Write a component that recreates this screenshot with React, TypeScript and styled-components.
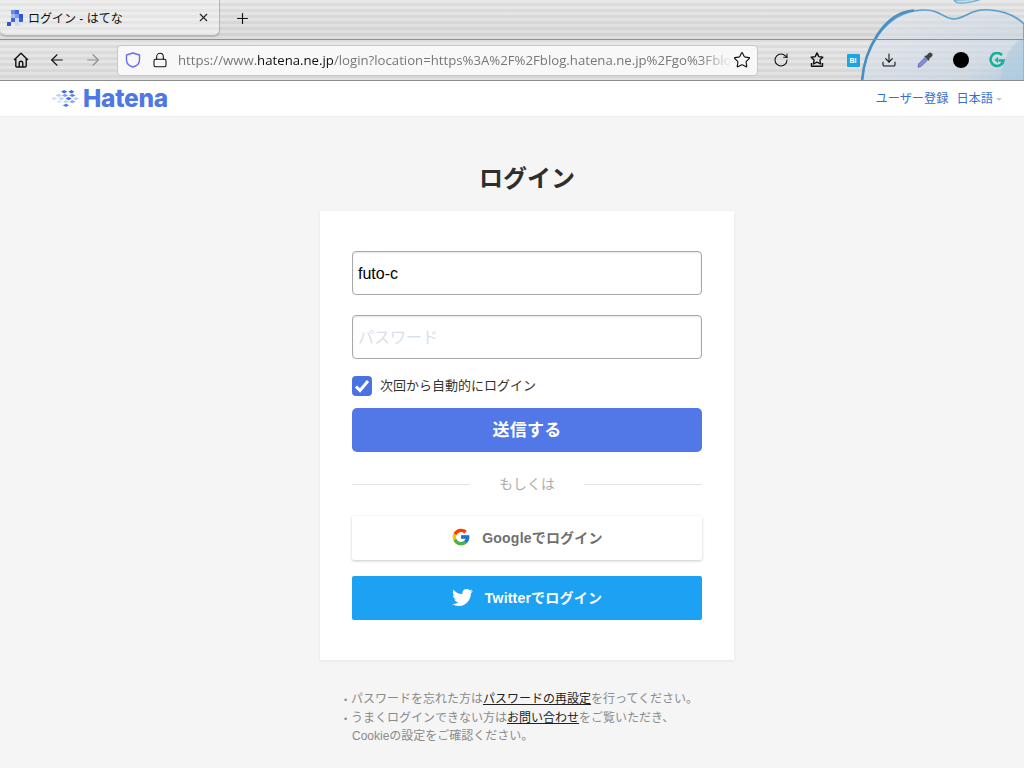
import styled, { createGlobalStyle } from 'styled-components'
import { ArrowLeft, ArrowRight, Lock, RotateCw, Star, X, Plus, Download } from 'lucide-react'
import { FaTwitter } from 'react-icons/fa'
import { FcGoogle } from 'react-icons/fc'

const JP = `"Liberation Sans", "Noto Sans CJK JP", sans-serif`

const GlobalStyle = createGlobalStyle`
  html, body {
    margin: 0;
    height: 768px;
    overflow: hidden;
    background: #f5f5f5;
    font-family: ${JP};
  }
`

const Chrome = styled.div`
  position: relative;
  height: 81px;
  overflow: hidden;
  border-bottom: 1px solid #8c8c8c;
  box-sizing: border-box;
  background:
    linear-gradient(180deg, rgba(255, 255, 255, 0.1), rgba(0, 0, 0, 0.04) 48%, rgba(255, 255, 255, 0.08) 50%, rgba(0, 0, 0, 0.02)),
    repeating-linear-gradient(180deg, #e6e6e6 0 3px, #dadada 3px 6px);
`

const AppleArt = styled.svg`
  position: absolute;
  top: 0;
  right: 0;
`

const TabStrip = styled.div`
  position: relative;
  display: flex;
  align-items: flex-start;
  height: 40px;
  box-sizing: border-box;
  border-bottom: 1px solid #8f8f8f;
`

const Tab = styled.div`
  display: flex;
  align-items: center;
  width: 220px;
  height: 36px;
  box-sizing: border-box;
  padding: 0 9px 0 7px;
  border: 1px solid #b4b4b4;
  border-top: 0;
  border-left: 0;
  border-radius: 0 0 6px 6px;
  background: repeating-linear-gradient(180deg, #ededed 0 3px, #e5e5e5 3px 6px);
  box-shadow: 0 1px 1px rgba(0, 0, 0, 0.15);
`

const TabTitle = styled.span`
  flex: 1;
  margin-left: 5px;
  font-size: 12px;
  color: #111;
`

const NewTab = styled.div`
  display: flex;
  margin: 10px 0 0 14px;
  color: #111;
`

const Toolbar = styled.div`
  position: relative;
  display: flex;
  align-items: center;
  height: 40px;
  padding: 0 0 0 3px;
`

const IconSlot = styled.div`
  display: flex;
  align-items: center;
  justify-content: center;
  width: 36px;
  flex: none;
`

const UrlBar = styled.div`
  display: flex;
  align-items: center;
  width: 641px;
  height: 31px;
  flex: none;
  box-sizing: border-box;
  margin-left: 6px;
  padding: 0 6px 0 7px;
  border: 1px solid #c8c8c8;
  border-radius: 4px;
  background: #f8f8f8;
`

const UrlIcons = styled.div`
  display: flex;
  align-items: center;
  gap: 11px;
  width: 53px;
  flex: none;
`

const UrlText = styled.div`
  flex: 1;
  overflow: hidden;
  white-space: nowrap;
  font-family: "Open Sans", sans-serif;
  font-size: 13.2px;
  color: #777;
  -webkit-mask-image: linear-gradient(90deg, #000 94%, transparent);
  mask-image: linear-gradient(90deg, #000 94%, transparent);

  b {
    font-weight: 400;
    color: #111;
  }
`

const ToolIcons = styled.div`
  display: flex;
  align-items: center;
  margin-left: 5px;
`

const BiBadge = styled.div`
  display: flex;
  align-items: center;
  justify-content: center;
  width: 13px;
  height: 13px;
  border-radius: 1px;
  background: #1ba6e3;
  color: #fff;
  font-size: 7px;
  font-weight: 700;
`

const BlackDot = styled.div`
  width: 16px;
  height: 16px;
  border-radius: 50%;
  background: #000;
`

const SiteHeader = styled.header`
  display: flex;
  align-items: center;
  justify-content: space-between;
  height: 36px;
  box-sizing: border-box;
  padding: 0 22px 0 51px;
  background: #fff;
  border-bottom: 1px solid #f0f0f0;
`

const Logo = styled.div`
  display: flex;
  align-items: center;
  gap: 3px;
`

const LogoText = styled.span`
  margin-bottom: 2px;
  font-family: Inter, sans-serif;
  font-size: 24.5px;
  font-weight: 800;
  letter-spacing: -0.3px;
  color: #4f78e6;
`

const HeaderLinks = styled.nav`
  display: flex;
  align-items: center;
  gap: 8px;
  margin-bottom: 2px;
  font-size: 12.2px;
  color: #3270d6;
`

const Caret = styled.span`
  display: inline-block;
  margin-left: 3px;
  vertical-align: middle;
  border: 3px solid transparent;
  border-top-color: #c4c8ce;
  border-bottom: 0;
`

const Main = styled.main`
  width: 414px;
  margin-left: 320px;
`

const Title = styled.h1`
  margin: 0;
  padding: 45px 0 16px;
  height: 33px;
  line-height: 33px;
  font-size: 24px;
  font-weight: 700;
  text-align: center;
  color: #2e2e2e;
`

const Card = styled.section`
  display: flex;
  flex-direction: column;
  height: 449px;
  box-sizing: border-box;
  padding: 40px 32px;
  background: #fff;
  box-shadow: 0 1px 3px rgba(0, 0, 0, 0.07);
`

const Field = styled.input`
  display: block;
  width: 350px;
  height: 44px;
  flex: none;
  box-sizing: border-box;
  margin-bottom: 20px;
  padding: 2px 5px 0;
  border: 1px solid #a8a8a8;
  border-radius: 4px;
  outline: none;
  box-shadow: inset 0 1px 2px rgba(0, 0, 0, 0.1);
  font-family: ${JP};
  font-size: 16px;
  color: #000;

  &::placeholder {
    color: #d8e0e9;
  }
`

const RememberRow = styled.label`
  display: flex;
  align-items: center;
  gap: 8px;
  height: 20px;
  margin: -3px 0 12px;
  font-size: 13px;
  line-height: 18px;
  color: #333;
`

const CheckBox = styled.span`
  display: flex;
  align-items: center;
  justify-content: center;
  width: 20px;
  height: 20px;
  border-radius: 4px;
  background: #4a72e0;
`

const Button = styled.button<{ $bg: string; $color: string; $radius: number; $shadow?: boolean; $fontSize: number; $gap: number; $lift: number }>`
  display: flex;
  align-items: center;
  justify-content: center;
  gap: ${p => p.$gap}px;
  width: 350px;
  height: 44px;
  flex: none;
  padding: 0 0 ${p => p.$lift}px;
  border: 0;
  border-radius: ${p => p.$radius}px;
  background: ${p => p.$bg};
  color: ${p => p.$color};
  box-shadow: ${p => (p.$shadow ? '0 1px 3px rgba(0, 0, 0, 0.22)' : 'none')};
  font-family: ${JP};
  font-size: ${p => p.$fontSize}px;
  font-weight: 700;
  letter-spacing: 0.2px;
`

const Divider = styled.div`
  display: flex;
  align-items: center;
  height: 64px;
  font-size: 14px;
  color: #adadad;

  &::before, &::after {
    content: '';
    flex: 1;
    height: 1px;
    background: #e4e4e4;
  }

  span {
    width: 114px;
    margin-bottom: 3px;
    text-align: center;
  }
`

const SocialStack = styled.div`
  display: flex;
  flex-direction: column;
  gap: 16px;
`

const Notes = styled.ul`
  margin: 31px 0 0 23px;
  padding: 0;
  list-style: none;
  font-size: 12px;
  line-height: 17.5px;
  color: #8a8a8a;

  li {
    padding-left: 9px;
    text-indent: -9px;
  }

  li::before {
    content: '•';
    display: inline-block;
    width: 8px;
    text-indent: 1px;
    font-size: 9px;
  }

  a {
    color: #222;
    text-decoration: underline;
  }
`

function Favicon() {
  return (
    <svg width="16" height="16" viewBox="0 0 16 16">
      <rect x="4" y="0" width="4" height="4" fill="#6c8cea" />
      <rect x="8" y="0" width="4" height="4" fill="#3f66dd" />
      <rect x="4" y="4" width="4" height="4" fill="#a8bcf0" />
      <rect x="8" y="4" width="4" height="4" fill="#7d9aec" />
      <rect x="12" y="4" width="4" height="4" fill="#2f55d8" />
      <rect x="4" y="8" width="4" height="4" fill="#3f66dd" />
      <rect x="8" y="8" width="4" height="4" fill="#cfd9f6" />
      <rect x="12" y="8" width="4" height="4" fill="#3a60dc" />
      <rect x="0" y="12" width="4" height="4" fill="#2f55d8" />
      <rect x="8" y="12" width="4" height="4" fill="#cfd9f6" />
      <rect x="12" y="12" width="4" height="4" fill="#dfe6fa" />
    </svg>
  )
}

function HomeIcon() {
  return (
    <svg width="16" height="16" viewBox="0 0 16 16" fill="none" stroke="#111" strokeWidth="1.4" strokeLinejoin="round">
      <path d="M1 8 8 1.2 15 8M2.8 6.600V14a1 1 0 0 0 1 1h8.400a1 1 0 0 0 1-1V6.600" />
      <path d="M6.200 15v-4a1.800 1.800 0 0 1 3.600 0v4" />
    </svg>
  )
}

function ShieldIcon() {
  return (
    <svg width="16" height="16" viewBox="0 0 16 16" fill="none" stroke="#6a6ff0" strokeWidth="1.4" strokeLinejoin="round">
      <path d="M8 1 14.500 3v5c0 3.400-2.800 6-6.500 7C4.300 14 1.500 11.400 1.500 8V3z" />
    </svg>
  )
}

function LibraryIcon() {
  return (
    <svg width="16" height="16" viewBox="0 0 16 16" fill="none" stroke="#111" strokeWidth="1.4" strokeLinejoin="round">
      <path d="M8 .9 9.800 4.600l4 .6-2.900 2.800.7 4-3.600-1.900-3.600 1.900.7-4L2.200 5.200l4-.6z" />
      <path d="M2.500 11v3.300h11V11" />
    </svg>
  )
}

function DropperIcon() {
  return (
    <svg width="16" height="16" viewBox="0 0 16 16">
      <path d="M1 15.200 1.500 12 8 5.500 10.500 8 4 14.500z" fill="#7f8fe0" stroke="#5a5f98" strokeWidth="0.8" />
      <path d="M7 4 9.500 3.500 11.500 1.200a2 2 0 0 1 3.300 3.300L12.500 6.500 12 9z" fill="#444" />
    </svg>
  )
}

function GrammarlyIcon() {
  return (
    <svg width="16" height="16" viewBox="0 0 16 16" fill="none">
      <path d="M13 3.200A6.500 6.500 0 1 0 14.500 8.500H9.500" stroke="#15b29a" strokeWidth="2.6" />
      <path d="M5.500 8 9 5v6z" fill="#15b29a" />
    </svg>
  )
}

const LOGO_DIAMONDS = [
  { x: 11, y: 2, c: '#3f6ae4' },
  { x: 19, y: 2, c: '#3f6ae4' },
  { x: 5, y: 6, c: '#bcd0f6' },
  { x: 12, y: 6, c: '#7f9fee' },
  { x: 20, y: 6, c: '#5c82ea' },
  { x: 0, y: 9.500, c: '#d4e0f8' },
  { x: 8, y: 9.500, c: '#c4d4f6' },
  { x: 16, y: 9.500, c: '#3f6ae4' },
  { x: 24, y: 9.500, c: '#bcd0f6' },
  { x: 6, y: 13, c: '#dbe5fa' },
  { x: 13, y: 13, c: '#c4d4f6' },
  { x: 20, y: 13, c: '#8aa8f0' },
  { x: 13, y: 17, c: '#4f78e6' },
]

function LogoMark() {
  return (
    <svg width="29" height="20" viewBox="0 0 32 20">
      {LOGO_DIAMONDS.map(d => (
        <polygon
          key={`${d.x}-${d.y}`}
          points={`${d.x},${d.y} ${d.x + 3.500},${d.y - 1.800} ${d.x + 7},${d.y} ${d.x + 3.500},${d.y + 1.800}`}
          fill={d.c}
        />
      ))}
    </svg>
  )
}

export default function App() {
  return (
    <>
      <GlobalStyle />
      <Chrome>
        <AppleArt width="170" height="80" viewBox="0 0 170 80">
          <defs>
            <linearGradient id="apple" x1="0" y1="0" x2="1" y2="1">
              <stop offset="0" stopColor="#e6ecf4" stopOpacity="0.45" />
              <stop offset="0.75" stopColor="#c8d6e6" stopOpacity="0.6" />
              <stop offset="1" stopColor="#a8c8e2" stopOpacity="0.85" />
            </linearGradient>
          </defs>
          <path d="M8 82C10 50 30 12 68 10c18-1 22 9 32 9 10 0 18-11 36-9 14 1 26 6 34 14v58z" fill="url(#apple)" stroke="#5b9dca" strokeWidth="1.6" />
          <path d="M8 82C10 50 30 12 60 10.500" fill="none" stroke="#4a8fc4" strokeWidth="2.600" />
          <path d="M100 0c2 5 12 4 28-1z" fill="#c7dceb" stroke="#6baad4" strokeWidth="1.3" />
          <path d="M170 38c-14 6-22 22-24 44h24z" fill="#a9c9e0" opacity="0.55" />
        </AppleArt>
        <TabStrip>
          <Tab>
            <Favicon />
            <TabTitle>ログイン - はてな</TabTitle>
            <X size={13} color="#222" />
          </Tab>
          <NewTab><Plus size={17} strokeWidth={1.6} /></NewTab>
        </TabStrip>
        <Toolbar>
          <IconSlot><HomeIcon /></IconSlot>
          <IconSlot><ArrowLeft size={18} color="#111" strokeWidth={1.5} /></IconSlot>
          <IconSlot><ArrowRight size={18} color="#8e8e8e" strokeWidth={1.5} /></IconSlot>
          <UrlBar>
            <UrlIcons>
              <ShieldIcon />
              <Lock size={16} color="#111" strokeWidth={1.6} />
            </UrlIcons>
            <UrlText>https://www.<b>hatena.ne.jp</b>/login?location=https%3A%2F%2Fblog.hatena.ne.jp%2Fgo%3Fblo</UrlText>
            <Star size={18} color="#111" strokeWidth={1.5} />
          </UrlBar>
          <ToolIcons>
            <IconSlot><RotateCw size={16} color="#111" strokeWidth={1.6} /></IconSlot>
            <IconSlot><LibraryIcon /></IconSlot>
            <IconSlot><BiBadge>BI</BiBadge></IconSlot>
            <IconSlot><Download size={16} color="#111" strokeWidth={1.6} /></IconSlot>
            <IconSlot><DropperIcon /></IconSlot>
            <IconSlot><BlackDot /></IconSlot>
            <IconSlot><GrammarlyIcon /></IconSlot>
          </ToolIcons>
        </Toolbar>
      </Chrome>
      <SiteHeader>
        <Logo>
          <LogoMark />
          <LogoText>Hatena</LogoText>
        </Logo>
        <HeaderLinks>
          <span>ユーザー登録</span>
          <span>日本語<Caret /></span>
        </HeaderLinks>
      </SiteHeader>
      <Main>
        <Title>ログイン</Title>
        <Card>
          <Field readOnly value="futo-c" />
          <Field readOnly type="password" placeholder="パスワード" />
          <RememberRow>
            <CheckBox>
              <svg width="16" height="14" viewBox="0 0 16 14">
                <path d="M2 7.500 6 11.500 14 2" fill="none" stroke="#fff" strokeWidth="3" />
              </svg>
            </CheckBox>
            次回から自動的にログイン
          </RememberRow>
          <Button $bg="#5278e8" $color="#fff" $radius={5} $fontSize={17} $gap={0} $lift={4}>送信する</Button>
          <Divider><span>もしくは</span></Divider>
          <SocialStack>
            <Button $bg="#fff" $color="#6f6f6f" $radius={2} $shadow $fontSize={14} $gap={11} $lift={2}>
              <FcGoogle size={20} />
              Googleでログイン
            </Button>
            <Button $bg="#1da1f2" $color="#fff" $radius={2} $fontSize={14} $gap={12} $lift={2}>
              <FaTwitter size={21} />
              Twitterでログイン
            </Button>
          </SocialStack>
        </Card>
        <Notes>
          <li>パスワードを忘れた方は<a>パスワードの再設定</a>を行ってください。</li>
          <li>うまくログインできない方は<a>お問い合わせ</a>をご覧いただき、<br />Cookieの設定をご確認ください。</li>
        </Notes>
      </Main>
    </>
  )
}
